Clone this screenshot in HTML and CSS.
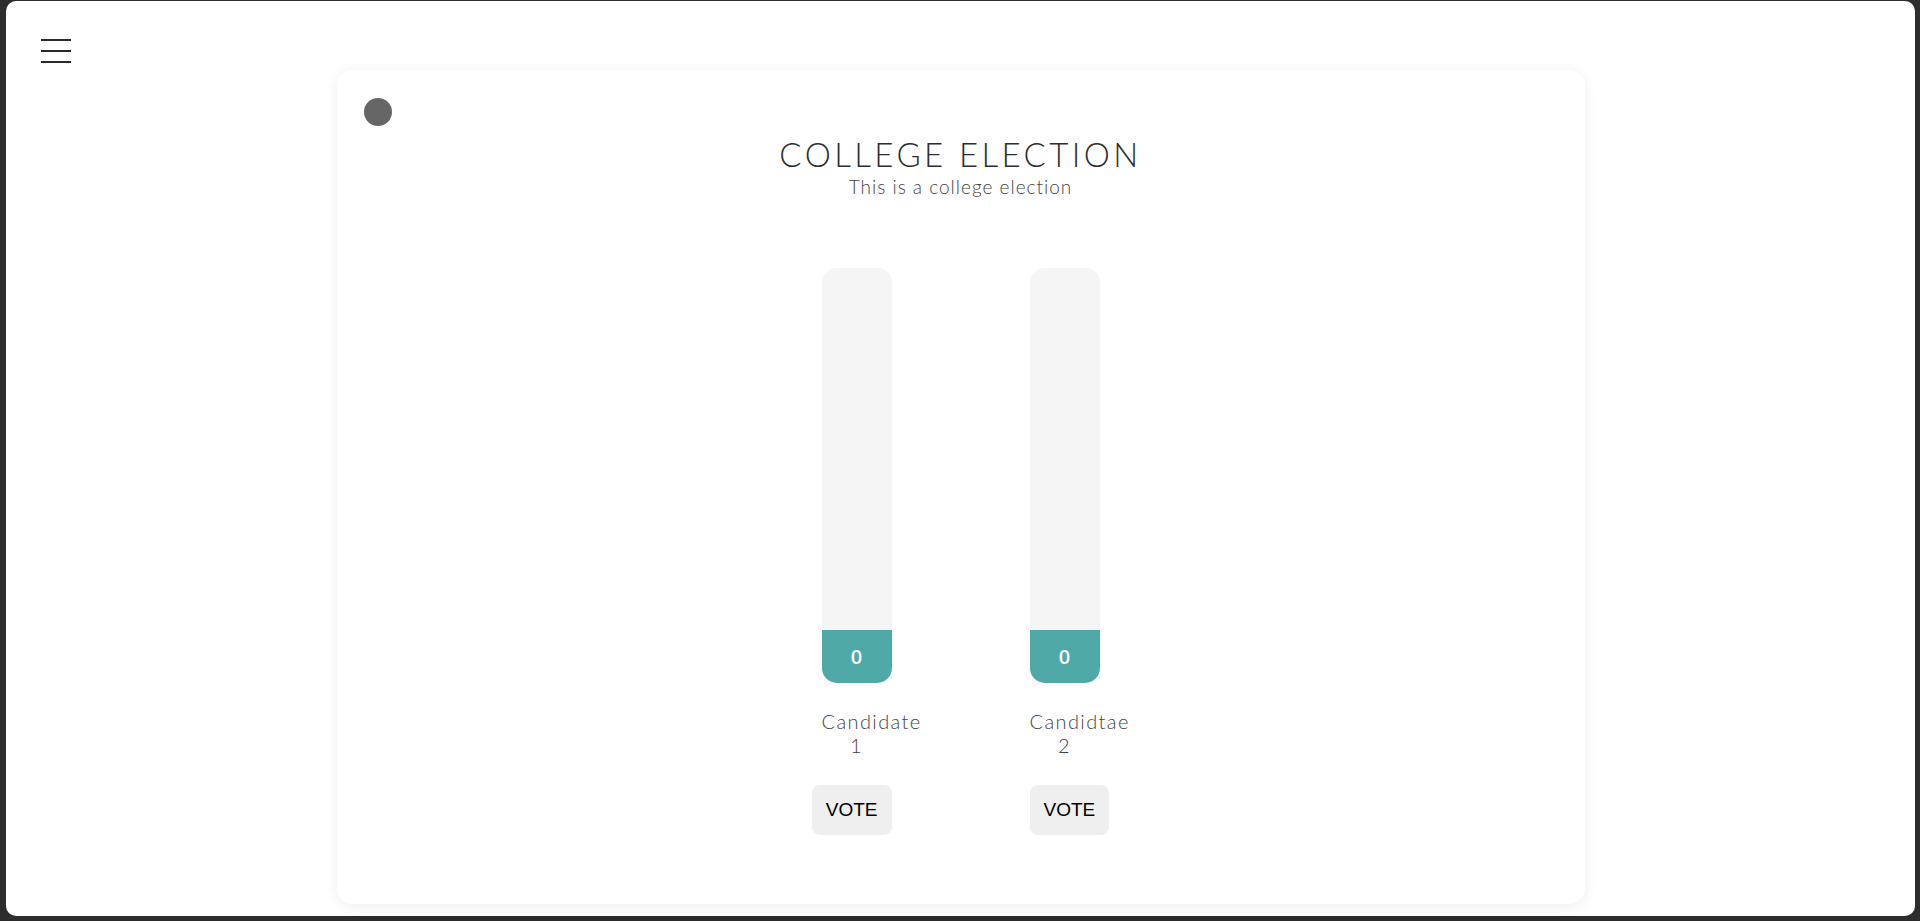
FILE: index.html
```html
<!DOCTYPE html>
<html lang="en">
<head>
<meta charset="utf-8">
<title>College Election</title>
<link rel="stylesheet" href="styles.css">
</head>
<body>
<div class="app">
  <header class="topbar">
    <button class="menu" aria-label="Menu">
      <span class="menu-line"></span>
      <span class="menu-line"></span>
      <span class="menu-line"></span>
    </button>
  </header>
  <main class="card">
    <span class="status-dot"></span>
    <h1 class="title">COLLEGE ELECTION</h1>
    <p class="subtitle">This is a college election</p>
    <div class="candidates">
      <div class="candidate candidate-left">
        <div class="bar">
          <div class="bar-fill">0</div>
        </div>
        <div class="name">Candidate 1</div>
        <button class="vote">VOTE</button>
      </div>
      <div class="candidate candidate-right">
        <div class="bar">
          <div class="bar-fill">0</div>
        </div>
        <div class="name">Candidtae 2</div>
        <button class="vote">VOTE</button>
      </div>
    </div>
  </main>
</div>
</body>
</html>
```
FILE: styles.css
```css
* { box-sizing: border-box; }

html, body {
  margin: 0;
  height: 100%;
}

body {
  background: #2d2d2d;
  padding: 1px 5px 5px 6px;
  font-family: "Lato", "Open Sans", sans-serif;
}

.app {
  background: #ffffff;
  border-radius: 10px;
  height: 915px;
  display: flex;
  flex-direction: column;
  overflow: hidden;
}

.topbar {
  height: 69px;
  padding: 38px 0 0 35px;
}

.menu {
  display: flex;
  flex-direction: column;
  gap: 9px;
  padding: 0;
  border: 0;
  background: transparent;
  width: 30px;
}

.menu-line {
  display: block;
  width: 30px;
  height: 2px;
  background: #2a2a2a;
}

.card {
  position: relative;
  align-self: center;
  width: 1248px;
  height: 834px;
  border-radius: 15px;
  background: #fff;
  box-shadow: 0 2px 14px rgba(0, 0, 0, 0.07);
  padding-top: 65px;
  display: flex;
  flex-direction: column;
  align-items: center;
}

.status-dot {
  position: absolute;
  top: 28px;
  left: 27px;
  width: 28px;
  height: 28px;
  border-radius: 50%;
  background: #666666;
}

.title {
  margin: 0;
  font-weight: 300;
  font-size: 33px;
  line-height: 38px;
  letter-spacing: 3.4px;
  color: #2e2e2e;
}

.subtitle {
  margin: 2px 0 0;
  font-weight: 300;
  font-size: 19px;
  line-height: 24px;
  letter-spacing: 1px;
  color: #444444;
}

.candidates {
  margin-top: 69px;
  display: flex;
  justify-content: center;
  gap: 138px;
}

.candidate {
  width: 78px;
  display: flex;
  flex-direction: column;
}

.candidate-left { align-items: flex-end; }
.candidate-right { align-items: flex-start; }

.bar {
  width: 70px;
  height: 415px;
  border-radius: 15px;
  background: #f5f5f5;
  overflow: hidden;
  display: flex;
  flex-direction: column;
  justify-content: flex-end;
}

.bar-fill {
  height: 53px;
  background: #4fa9a6;
  color: #ffffff;
  font-family: "Open Sans", sans-serif;
  font-weight: 600;
  font-size: 20px;
  line-height: 53px;
  text-align: center;
}

.name {
  width: 70px;
  margin-top: 26px;
  font-weight: 300;
  font-size: 20px;
  line-height: 24px;
  letter-spacing: 1.4px;
  color: #444444;
  text-align: center;
}

.vote {
  margin-top: 28px;
  height: 50px;
  padding: 0 14px;
  border: 0;
  border-radius: 8px;
  background: #efefef;
  color: #000;
  font-family: "Liberation Sans", Arial, sans-serif;
  font-size: 19px;
}
```
